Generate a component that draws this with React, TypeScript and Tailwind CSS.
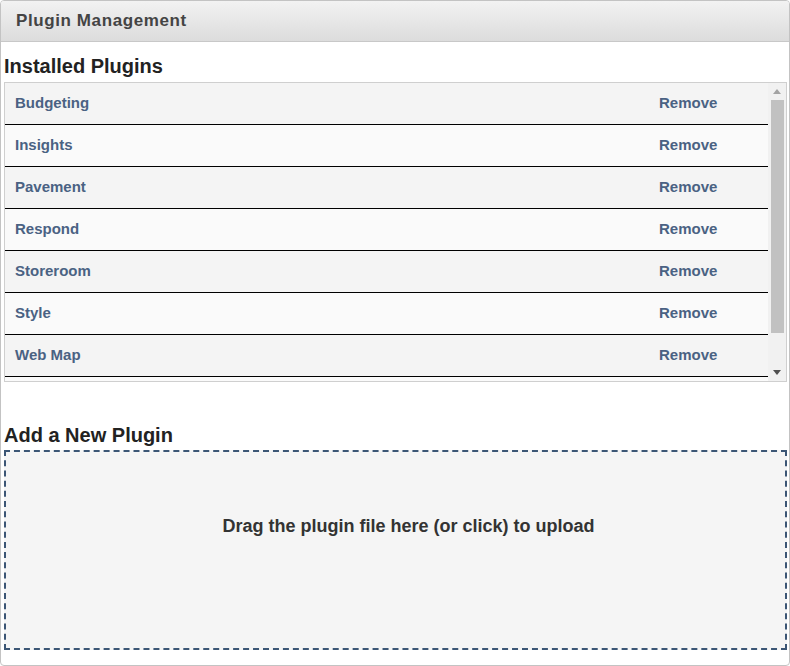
const plugins = ["Budgeting", "Insights", "Pavement", "Respond", "Storeroom", "Style", "Web Map"];

// classic scrollbar drawn by hand, headless chrome only gives an overlay one
function ScrollBar() {
  return (
    <div className="w-[18px] shrink-0 bg-[#f1f1f1] flex flex-col items-center">
      <div className="h-[17px] flex items-center justify-center">
        <svg width="8" height="5" viewBox="0 0 8 5">
          <path d="M0 5 L4 0 L8 5 Z" fill="#a3a3a3" />
        </svg>
      </div>
      <div className="w-[13px] h-[233px] bg-[#c1c1c1]" />
      <div className="flex-1" />
      <div className="h-[17px] flex items-center justify-center">
        <svg width="8" height="5" viewBox="0 0 8 5">
          <path d="M0 0 L8 0 L4 5 Z" fill="#505050" />
        </svg>
      </div>
    </div>
  );
}

export default function App() {
  return (
    <div className="w-[790px] h-[666px] bg-white font-['Liberation_Sans',Arial,sans-serif]">
      <div className="w-full h-full border border-[#c3c3c3] rounded-[4px] overflow-hidden flex flex-col">
        <div className="h-[41px] shrink-0 border-b border-[#c8c8c8] bg-gradient-to-b from-[#f2f2f2] to-[#dcdcdc] pl-[15px] flex items-center">
          <span className="text-[17px] tracking-[0.6px] font-bold text-[#444]">Plugin Management</span>
        </div>

        <div className="pl-[3px] pr-[2px]">
          <h2 className="mt-[13px] mb-[4px] text-[20px] leading-[23px] font-bold text-[#222]">Installed Plugins</h2>

          <div className="h-[300px] border border-[#cfcfcf] flex">
            <div className="flex-1 bg-[#fafafa] overflow-hidden">
              {plugins.map((name, i) => (
                <div
                  key={name}
                  className={`h-[42px] flex items-center border-b border-black text-[15px] font-bold text-[#4a6283] ${i % 2 === 0 ? "bg-[#f4f4f4]" : "bg-[#fafafa]"}`}
                >
                  <span className="flex-1 pl-[10px]">{name}</span>
                  <span className="w-[109px] cursor-pointer">Remove</span>
                </div>
              ))}
            </div>
            <ScrollBar />
          </div>

          <h2 className="mt-[42px] mb-[3px] text-[20px] leading-[23px] font-bold text-[#222]">Add a New Plugin</h2>

          <div className="h-[200px] border-2 border-dashed border-[#3c5675] bg-[#f5f5f5] pt-[63px] pl-[26px] text-center cursor-pointer">
            <span className="text-[18px] leading-[21px] font-bold text-[#333]">Drag the plugin file here (or click) to upload</span>
          </div>
        </div>
      </div>
    </div>
  );
}
